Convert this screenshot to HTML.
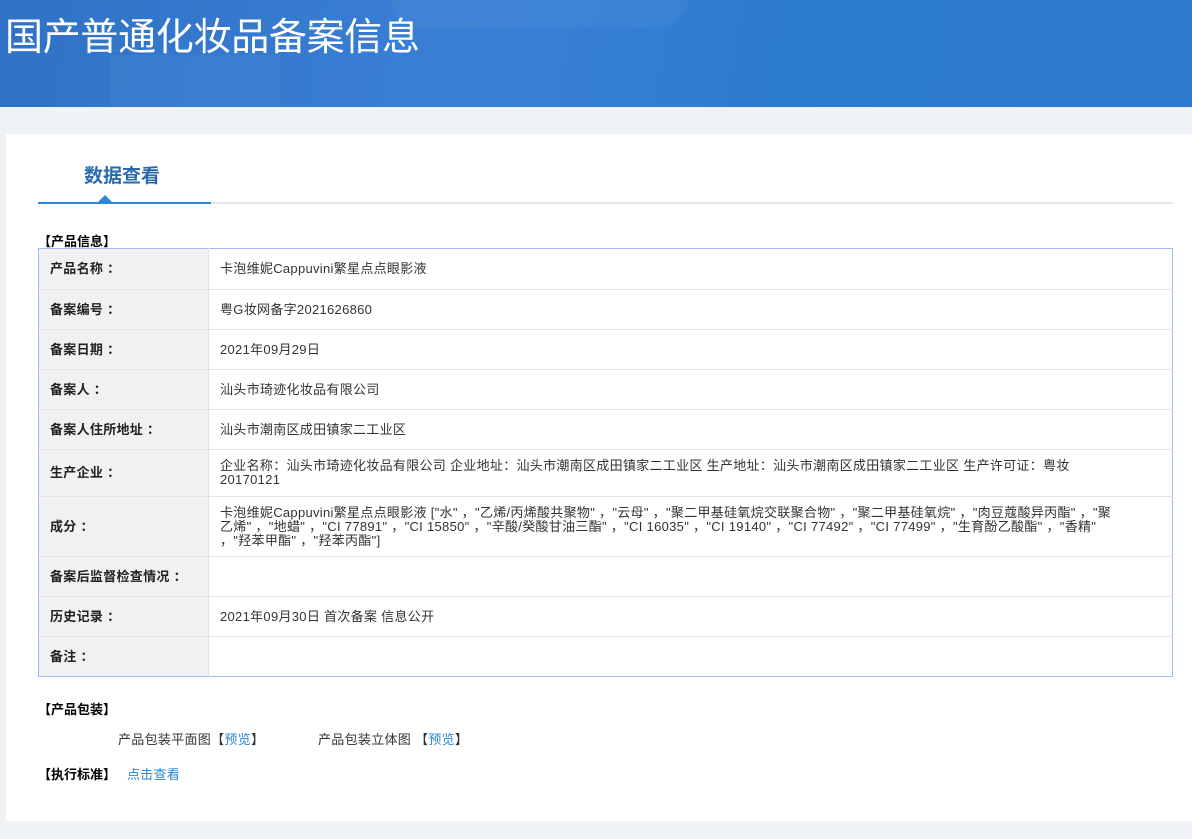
<!DOCTYPE html>
<html><head><meta charset="utf-8"><style>
*{margin:0;padding:0;box-sizing:border-box}
body{width:1192px;height:839px;background:#eff3f6;font-family:"Liberation Sans","Noto Sans CJK SC",sans-serif;font-size:13px;color:#333;position:relative;overflow:hidden}
.hd{position:absolute;left:0;top:0;width:1192px;height:107px;background:linear-gradient(100deg,#2f72c6 0%,#3a80d6 40%,#2a7bcf 70%,#2f7ad0 100%);overflow:hidden}
.hd .s1{position:absolute;left:110px;top:55px;width:170px;height:52px;background:rgba(255,255,255,.04)}
.hd .s2{position:absolute;left:390px;top:-40px;width:300px;height:68px;border-radius:40px;background:rgba(255,255,255,.04)}
.hd h1{position:absolute;left:5px;top:6px;font-size:38px;font-weight:normal;color:#fff;letter-spacing:-0.3px;font-family:"Liberation Sans","Noto Sans CJK SC",sans-serif}
.panel{position:absolute;left:6px;top:134px;width:1186px;height:687px;background:#fff}
.tabline{position:absolute;left:38px;top:202px;width:1135px;height:2px;background:#e6e6e6}
.tabblue{position:absolute;left:38px;top:202px;width:173px;height:2px;background:#2a88d8}
.tri{position:absolute;left:98px;top:195px;width:0;height:0;border-left:7px solid transparent;border-right:7px solid transparent;border-bottom:7px solid #2a88d8}
.tab{position:absolute;left:84px;top:161px;font-size:19px;font-weight:bold;color:#2a6aaa}
.sec{position:absolute;font-weight:bold;color:#000;font-size:13px}
table{position:absolute;left:38px;top:248px;width:1135px;border-collapse:collapse;border:1px solid #9dbff0}
td{border-bottom:1px solid #e3e3e3;padding:0 11px;vertical-align:middle;line-height:14px;font-size:13px;letter-spacing:0.3px}
td.l{width:170px;background:#f1f1f1;font-weight:bold;color:#222;border-right:1px solid #e3e3e3}
tr:last-child td{border-bottom:none}
a{color:#2a88d8;text-decoration:none}
</style></head><body>
<div class="hd"><div class="s1"></div><div class="s2"></div><h1>国产普通化妆品备案信息</h1></div>
<div class="panel"></div>
<div class="tab">数据查看</div>
<div class="tabline"></div><div class="tabblue"></div><div class="tri"></div>
<div class="sec" style="left:38px;top:231px">【产品信息】</div>
<table>
<tr style="height:41px"><td class="l">产品名称 ：</td><td>卡泡维妮Cappuvini繁星点点眼影液</td></tr>
<tr style="height:40px"><td class="l">备案编号 ：</td><td>粤G妆网备字2021626860</td></tr>
<tr style="height:40px"><td class="l">备案日期 ：</td><td>2021年09月29日</td></tr>
<tr style="height:40px"><td class="l">备案人 ：</td><td>汕头市琦迹化妆品有限公司</td></tr>
<tr style="height:40px"><td class="l">备案人住所地址 ：</td><td>汕头市潮南区成田镇家二工业区</td></tr>
<tr style="height:47px"><td class="l">生产企业 ：</td><td style="padding-right:90px">企业名称：汕头市琦迹化妆品有限公司 企业地址：汕头市潮南区成田镇家二工业区 生产地址：汕头市潮南区成田镇家二工业区 生产许可证：粤妆20170121</td></tr>
<tr style="height:60px"><td class="l">成分 ：</td><td style="padding-right:60px">卡泡维妮Cappuvini繁星点点眼影液 ["水" ，"乙烯/丙烯酸共聚物" ，"云母" ，"聚二甲基硅氧烷交联聚合物" ，"聚二甲基硅氧烷" ，"肉豆蔻酸异丙酯" ，"聚乙烯" ，"地蜡" ，"CI 77891" ，"CI 15850" ，"辛酸/癸酸甘油三酯" ，"CI 16035" ，"CI 19140" ，"CI 77492" ，"CI 77499" ，"生育酚乙酸酯" ，"香精" ，"羟苯甲酯" ，"羟苯丙酯"]</td></tr>
<tr style="height:40px"><td class="l">备案后监督检查情况 ：</td><td></td></tr>
<tr style="height:40px"><td class="l">历史记录 ：</td><td>2021年09月30日 首次备案 信息公开</td></tr>
<tr style="height:40px"><td class="l">备注 ：</td><td></td></tr>
</table>
<div class="sec" style="left:38px;top:699px">【产品包装】</div>
<div style="position:absolute;left:118px;top:729px;letter-spacing:0.3px">产品包装平面图【<a>预览</a>】</div>
<div style="position:absolute;left:318px;top:729px;letter-spacing:0.3px">产品包装立体图 【<a>预览</a>】</div>
<div class="sec" style="left:38px;top:764px">【执行标准】</div>
<div style="position:absolute;left:127px;top:764px;letter-spacing:0.3px"><a>点击查看</a></div>
</body></html>
